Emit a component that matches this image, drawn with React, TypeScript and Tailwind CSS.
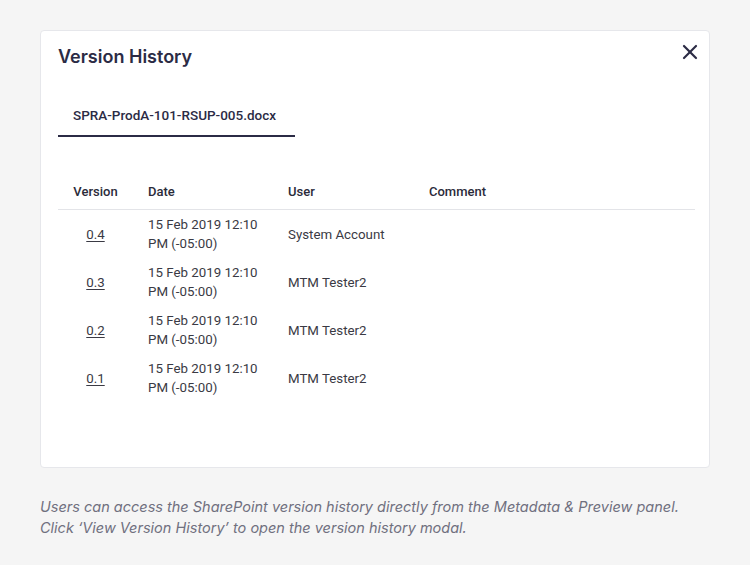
import { X } from "lucide-react"

const rows = [
  { version: "0.4", date: "15 Feb 2019 12:10", tz: "PM (-05:00)", user: "System Account" },
  { version: "0.3", date: "15 Feb 2019 12:10", tz: "PM (-05:00)", user: "MTM Tester2" },
  { version: "0.2", date: "15 Feb 2019 12:10", tz: "PM (-05:00)", user: "MTM Tester2" },
  { version: "0.1", date: "15 Feb 2019 12:10", tz: "PM (-05:00)", user: "MTM Tester2" },
]

export default function App() {
  return (
    <div className="min-h-[565px] w-[750px] bg-[#f5f5f5] pt-[30px] px-[40px] font-['Roboto',sans-serif]">
      <div className="h-[438px] bg-white border border-[#e6e7eb] rounded-[4px] pl-[17px] pr-[14px] pt-3">
        <div className="flex items-start justify-between">
          <h1 className="text-[18px] leading-[28px] font-semibold text-[#2b2b45] font-['Inter',sans-serif]">Version History</h1>
          <button className="mt-[-3px] mr-[-7px] text-[#2b2b45]">
            <X className="w-6 h-6" strokeWidth={2.2} />
          </button>
        </div>

        <div className="mt-[32px] w-[237px] border-b-2 border-[#2b2b45] pl-[15px] pb-[8px]">
          <span className="text-[13.5px] leading-[20px] font-medium text-[#2b2b45]">SPRA-ProdA-101-RSUP-005.docx</span>
        </div>

        <div className="mt-[45px]">
          <div className="grid grid-cols-[90px_140px_141px_1fr] border-b border-[#e3e4e8] pb-[7px] text-[13px] leading-[20px] font-medium text-[#2b2b3a]">
            <div className="pr-[15px] text-center">Version</div>
            <div>Date</div>
            <div>User</div>
            <div>Comment</div>
          </div>
          {rows.map((r) => (
            <div key={r.version} className="grid grid-cols-[90px_140px_141px_1fr] items-center py-[5px] text-[13.3px] leading-[19px] text-[#3a3a44]">
              <div className="pr-[15px] text-center">
                <a href="#" className="underline underline-offset-2">{r.version}</a>
              </div>
              <div>
                <div>{r.date}</div>
                <div>{r.tz}</div>
              </div>
              <div>{r.user}</div>
              <div></div>
            </div>
          ))}
        </div>
      </div>

      <p className="mt-[28px] text-[14.5px] leading-[21px] italic text-[#70707f] font-['Inter',sans-serif]">
        Users can access the SharePoint version history directly from the Metadata &amp; Preview panel.
        <br />
        Click ‘View Version History’ to open the version history modal.
      </p>
    </div>
  )
}
